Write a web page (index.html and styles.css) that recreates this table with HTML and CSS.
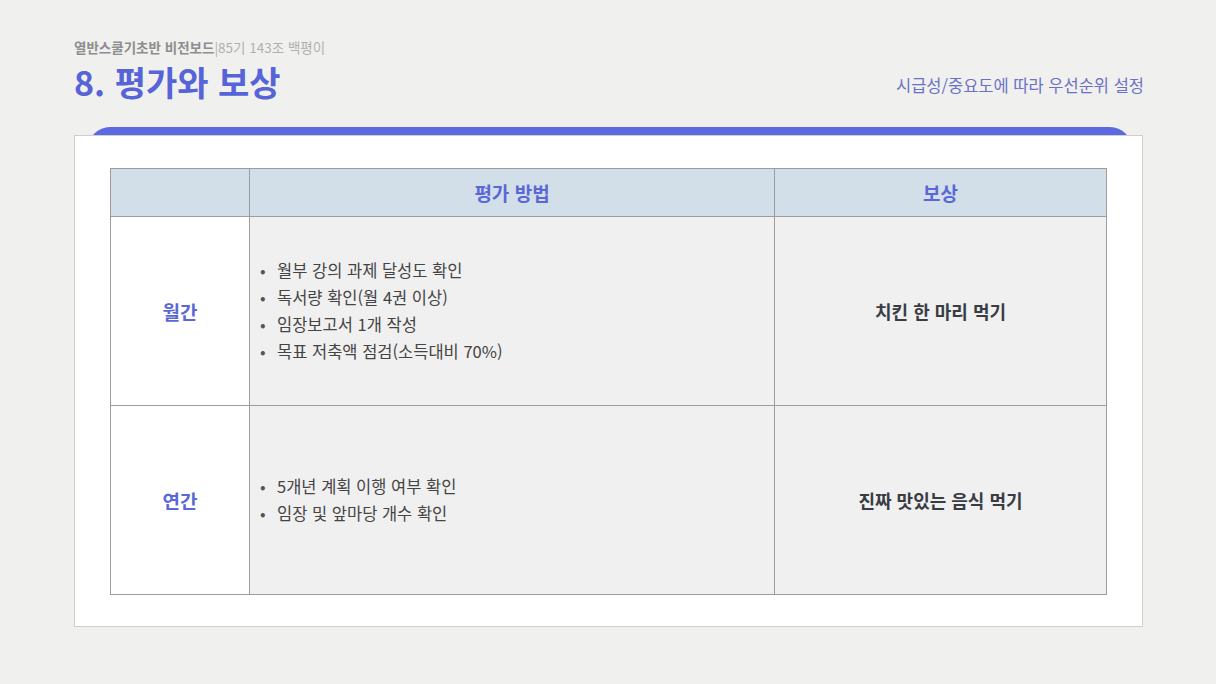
FILE: index.html
```html
<!DOCTYPE html>
<html lang="ko">
<head>
<meta charset="utf-8">
<title>8. 평가와 보상</title>
<link rel="stylesheet" href="styles.css">
</head>
<body>
<div class="page">
  <header class="head">
    <div class="head-left">
      <div class="crumb"><span class="crumb-main">열반스쿨기초반 비전보드</span><span class="crumb-sub">|85기 143조 백평이</span></div>
      <h1 class="title">8. 평가와 보상</h1>
    </div>
    <div class="head-right">시급성/중요도에 따라 우선순위 설정</div>
  </header>
  <div class="tab"></div>
  <section class="card">
    <table class="grid">
      <colgroup>
        <col class="c1">
        <col class="c2">
        <col class="c3">
      </colgroup>
      <thead>
        <tr>
          <th class="blank"></th>
          <th>평가 방법</th>
          <th>보상</th>
        </tr>
      </thead>
      <tbody>
        <tr>
          <td class="label">월간</td>
          <td class="method">
            <ul>
              <li>월부 강의 과제 달성도 확인</li>
              <li>독서량 확인(월 4권 이상)</li>
              <li>임장보고서 1개 작성</li>
              <li>목표 저축액 점검(소득대비 70%)</li>
            </ul>
          </td>
          <td class="reward">치킨 한 마리 먹기</td>
        </tr>
        <tr>
          <td class="label">연간</td>
          <td class="method">
            <ul>
              <li>5개년 계획 이행 여부 확인</li>
              <li>임장 및 앞마당 개수 확인</li>
            </ul>
          </td>
          <td class="reward">진짜 맛있는 음식 먹기</td>
        </tr>
      </tbody>
    </table>
  </section>
</div>
</body>
</html>
```

FILE: styles.css
```css
* { box-sizing: border-box; }
html, body {
  margin: 0;
  padding: 0;
  background: #f0f0ee;
}
body {
  font-family: "Noto Sans CJK KR", "Noto Sans", sans-serif;
  color: #333;
  width: 1216px;
  height: 684px;
  overflow: hidden;
}
.page {
  padding: 39px 72px 0 74px;
}
.head {
  display: flex;
  justify-content: space-between;
  align-items: flex-start;
  height: 88px;
}
.head-left {
  display: flex;
  flex-direction: column;
}
.crumb {
  font-size: 13.5px;
  line-height: 17px;
}
.crumb-main {
  color: #8e8e8e;
  font-weight: 700;
}
.crumb-sub {
  color: #b0b0b0;
  font-weight: 400;
}
.title {
  margin: 6px 0 0 0;
  font-size: 34px;
  line-height: 40px;
  font-weight: 700;
  color: #5664d8;
}
.head-right {
  font-size: 16.5px;
  line-height: 22px;
  color: #6b72c6;
  padding-top: 35px;
}
.tab {
  height: 22px;
  margin: 0 12px -14px 14px;
  background: #5b6ae0;
  border-radius: 22px 22px 0 0;
}
.card {
  background: #fff;
  border: 1px solid #cfcfcf;
  height: 492px;
  width: 1069px;
  padding: 32px 35px 0 35px;
}
.grid {
  border-collapse: collapse;
  width: 996px;
  table-layout: fixed;
}
.c1 { width: 139px; }
.c2 { width: 525px; }
.c3 { width: 332px; }
.grid th, .grid td {
  border: 1px solid #9d9d9d;
  padding: 0;
  text-align: center;
  vertical-align: middle;
}
.grid thead th {
  background: #d2dee8;
  height: 48px;
  font-size: 19px;
  font-weight: 700;
  color: #5a68d6;
}
.grid tbody tr {
  height: 189px;
}
.label {
  background: #fff;
  font-size: 19px;
  font-weight: 700;
  color: #5a68d6;
}
.method {
  background: #f0f0f0;
  text-align: left !important;
}
.method ul {
  margin: 0;
  padding: 0 0 0 10px;
  list-style: none;
}
.method li {
  font-size: 16.5px;
  line-height: 27px;
  color: #444;
  display: flex;
}
.method li::before {
  content: "•";
  width: 17px;
  flex: none;
  color: #555;
}
.reward {
  background: #f0f0f0;
  font-size: 18px;
  font-weight: 700;
  color: #3a3c44;
}
```
